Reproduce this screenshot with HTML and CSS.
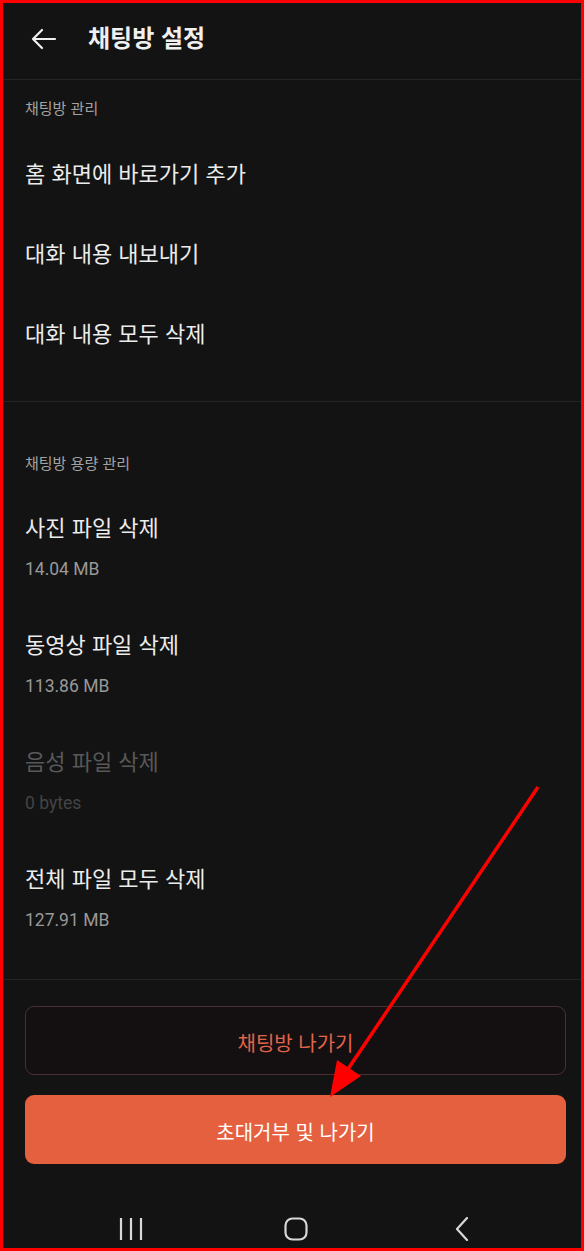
FILE: index.html
```
<!DOCTYPE html>
<html lang="ko">
<head>
  <meta charset="UTF-8">
  <meta name="viewport" content="width=device-width, initial-scale=1.0">
  <title>채팅방 설정</title>
  <link rel="stylesheet" href="styles.css">
</head>
<body>
  <div class="frame">
    <div class="screen">
      <header class="topbar">
        <button class="back" aria-label="뒤로">
          <svg width="26" height="22" viewBox="0 0 26 22">
            <path d="M24 11H2M11 2L2 11L11 20" fill="none" stroke="#f0f0f0" stroke-width="2.2" stroke-linecap="round" stroke-linejoin="round"/>
          </svg>
        </button>
        <h1 class="title">채팅방 설정</h1>
      </header>

      <section class="group group-first">
        <div class="label">채팅방 관리</div>
        <div class="item">홈 화면에 바로가기 추가</div>
        <div class="item">대화 내용 내보내기</div>
        <div class="item">대화 내용 모두 삭제</div>
      </section>

      <section class="group group-storage">
        <div class="label">채팅방 용량 관리</div>
        <div class="row">
          <div class="row-title">사진 파일 삭제</div>
          <div class="row-sub">14.04 MB</div>
        </div>
        <div class="row">
          <div class="row-title">동영상 파일 삭제</div>
          <div class="row-sub">113.86 MB</div>
        </div>
        <div class="row disabled">
          <div class="row-title">음성 파일 삭제</div>
          <div class="row-sub">0 bytes</div>
        </div>
        <div class="row">
          <div class="row-title">전체 파일 모두 삭제</div>
          <div class="row-sub">127.91 MB</div>
        </div>
      </section>

      <div class="actions">
        <button class="btn btn-outline">채팅방 나가기</button>
        <button class="btn btn-fill">초대거부 및 나가기</button>
      </div>

      <nav class="navbar">
        <svg width="24" height="24" viewBox="0 0 24 24">
          <path d="M2 1V23M12 1V23M22 1V23" stroke="#d8d8d8" stroke-width="2.2"/>
        </svg>
        <svg width="24" height="24" viewBox="0 0 24 24">
          <rect x="1.5" y="1.5" width="21" height="21" rx="7" fill="none" stroke="#d8d8d8" stroke-width="2.2"/>
        </svg>
        <svg width="16" height="24" viewBox="0 0 16 24">
          <path d="M13 1L3 12L13 23" fill="none" stroke="#d8d8d8" stroke-width="2.2" stroke-linecap="round" stroke-linejoin="round"/>
        </svg>
      </nav>

      <svg class="annotation" width="578" height="1245" viewBox="3 3 578 1245">
        <line x1="538" y1="787" x2="346" y2="1072" stroke="#ff0000" stroke-width="3.5"/>
        <polygon points="330,1097 361,1076 337,1060" fill="#ff0000"/>
      </svg>
    </div>
  </div>
</body>
</html>
```

FILE: styles.css
```
* {
  margin: 0;
  padding: 0;
  box-sizing: border-box;
}

body {
  font-family: "Noto Sans CJK KR", "Noto Sans", sans-serif;
  background-color: #131313;
  width: 584px;
  height: 1251px;
  overflow: hidden;
}

.frame {
  width: 584px;
  height: 1251px;
  border: 3px solid #ff0000;
}

.screen {
  position: relative;
  height: 100%;
  background-color: #131313;
  color: #ececec;
  display: flex;
  flex-direction: column;
}

.topbar {
  height: 77px;
  border-bottom: 1px solid #262424;
  display: flex;
  align-items: center;
  padding-left: 28px;
}

.back {
  background: none;
  border: none;
  width: 26px;
  height: 22px;
  display: flex;
  margin-top: -5px;
}

.title {
  font-size: 24px;
  font-weight: 700;
  color: #f0f0f0;
  margin-left: 31px;
  margin-top: -10px;
}

.group {
  padding-left: 22px;
  border-bottom: 1px solid #262424;
}

.label {
  font-size: 15px;
  line-height: 20px;
  color: #a3a3a3;
}

.group-first {
  padding-top: 18px;
  padding-bottom: 27px;
}

.group-first .label {
  margin-bottom: 16px;
}

.item {
  height: 80px;
  line-height: 76px;
  font-size: 22px;
  color: #ececec;
}

.group-storage {
  padding-top: 51px;
  padding-bottom: 27px;
}

.group-storage .label {
  margin-bottom: 11px;
}

.row {
  height: 117px;
  padding-top: 28px;
}

.row-title {
  font-size: 22px;
  line-height: 28px;
  color: #ececec;
}

.row-sub {
  font-family: Roboto, "Noto Sans", sans-serif;
  font-size: 17.5px;
  line-height: 24px;
  margin-top: 17px;
  color: #999999;
}

.row.disabled .row-title {
  color: #585858;
}

.row.disabled .row-sub {
  color: #444444;
}

.actions {
  padding: 26px 15px 0 22px;
  display: flex;
  flex-direction: column;
  gap: 20px;
}

.btn {
  height: 69px;
  border-radius: 9px;
  font-family: "Noto Sans CJK KR", sans-serif;
  font-size: 20px;
  padding-top: 3px;
}

.btn-outline {
  background-color: #140f11;
  border: 1.5px solid #4c2e35;
  color: #e0644a;
}

.btn-fill {
  background-color: #e5603f;
  border: none;
  color: #ffffff;
}

.navbar {
  flex: 1;
  display: flex;
  align-items: flex-end;
  padding-bottom: 7px;
}

.navbar svg:nth-child(1) {
  margin-left: 116px;
}

.navbar svg:nth-child(2) {
  margin-left: 141px;
}

.navbar svg:nth-child(3) {
  margin-left: 146px;
}

.annotation {
  position: absolute;
  left: 0;
  top: 0;
  pointer-events: none;
}
```
